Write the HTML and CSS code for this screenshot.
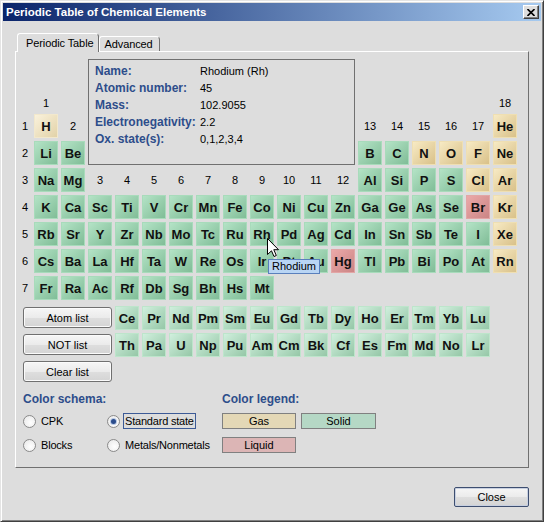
FILE: index.html
```html
<!DOCTYPE html>
<html lang="en">
<head>
    <meta charset="utf-8"/>
    <title>Periodic Table of Chemical Elements</title>
    <link rel="stylesheet" href="styles.css">
</head>
<body>
<div class="window">
    <div class="titlebar">
        <span class="title">Periodic Table of Chemical Elements</span>
        <span class="closebtn">
            <svg width="8" height="7" viewBox="0 0 8 7"><path d="M0.5 0 L7.5 7 M7.5 0 L0.5 7" stroke="#000" stroke-width="1.6"/></svg>
        </span>
    </div>

    <div class="client">
        <ul class="tabs">
            <li class="tab active">Periodic Table</li>
            <li class="tab">Advanced</li>
        </ul>

        <div class="pane">
            <div class="ptable">
                <div class="info">
                    <span class="k">Name:</span><span class="v">Rhodium (Rh)</span>
                    <span class="k">Atomic number:</span><span class="v">45</span>
                    <span class="k">Mass:</span><span class="v">102.9055</span>
                    <span class="k">Electronegativity:</span><span class="v">2.2</span>
                    <span class="k">Ox. state(s):</span><span class="v">0,1,2,3,4</span>
                </div>
                <i class="sp3"></i><i class="sp6"></i>

                <i></i><span class="gn top">1</span><i></i><i class="sp5"></i><span class="gn top">18</span>

                <span class="pn">1</span>
                <div class="el g h">H</div>
                <span class="gn">2</span>
                <span class="gn">13</span><span class="gn">14</span><span class="gn">15</span><span class="gn">16</span><span class="gn">17</span>
                <div class="el g">He</div>

                <span class="pn">2</span>
                <div class="el s">Li</div><div class="el s">Be</div>
                <div class="el s">B</div><div class="el s">C</div><div class="el g">N</div><div class="el g">O</div><div class="el g">F</div><div class="el g">Ne</div>

                <span class="pn">3</span>
                <div class="el s">Na</div><div class="el s">Mg</div>
                <span class="gn">3</span><span class="gn">4</span><span class="gn">5</span><span class="gn">6</span><span class="gn">7</span>
                <span class="gn">8</span><span class="gn">9</span><span class="gn">10</span><span class="gn">11</span><span class="gn">12</span>
                <div class="el s">Al</div><div class="el s">Si</div><div class="el s">P</div><div class="el s">S</div><div class="el g">Cl</div><div class="el g">Ar</div>

                <span class="pn">4</span>
                <div class="el s">K</div><div class="el s">Ca</div><div class="el s">Sc</div><div class="el s">Ti</div><div class="el s">V</div><div class="el s">Cr</div>
                <div class="el s">Mn</div><div class="el s">Fe</div><div class="el s">Co</div><div class="el s">Ni</div><div class="el s">Cu</div><div class="el s">Zn</div>
                <div class="el s">Ga</div><div class="el s">Ge</div><div class="el s">As</div><div class="el s">Se</div><div class="el l">Br</div><div class="el g">Kr</div>

                <span class="pn">5</span>
                <div class="el s">Rb</div><div class="el s">Sr</div><div class="el s">Y</div><div class="el s">Zr</div><div class="el s">Nb</div><div class="el s">Mo</div>
                <div class="el s">Tc</div><div class="el s">Ru</div><div class="el s">Rh</div><div class="el s">Pd</div><div class="el s">Ag</div><div class="el s">Cd</div>
                <div class="el s">In</div><div class="el s">Sn</div><div class="el s">Sb</div><div class="el s">Te</div><div class="el s">I</div><div class="el g">Xe</div>

                <span class="pn">6</span>
                <div class="el s">Cs</div><div class="el s">Ba</div><div class="el s">La</div><div class="el s">Hf</div><div class="el s">Ta</div><div class="el s">W</div>
                <div class="el s">Re</div><div class="el s">Os</div><div class="el s">Ir</div><div class="el s">Pt</div><div class="el s">Au</div><div class="el l">Hg</div>
                <div class="el s">Tl</div><div class="el s">Pb</div><div class="el s">Bi</div><div class="el s">Po</div><div class="el s">At</div><div class="el g">Rn</div>

                <span class="pn">7</span>
                <div class="el s">Fr</div><div class="el s">Ra</div><div class="el s">Ac</div><div class="el s">Rf</div><div class="el s">Db</div><div class="el s">Sg</div>
                <div class="el s">Bh</div><div class="el s">Hs</div><div class="el s">Mt</div>
            </div>

            <div class="lower">
                <div class="btns">
                    <button class="btn">Atom list</button>
                    <button class="btn">NOT list</button>
                    <button class="btn">Clear list</button>
                </div>
                <div class="fblock">
                    <div class="el f">Ce</div><div class="el f">Pr</div><div class="el f">Nd</div><div class="el f">Pm</div><div class="el f">Sm</div><div class="el f">Eu</div><div class="el f">Gd</div>
                    <div class="el f">Tb</div><div class="el f">Dy</div><div class="el f">Ho</div><div class="el f">Er</div><div class="el f">Tm</div><div class="el f">Yb</div><div class="el f">Lu</div>
                    <div class="el f">Th</div><div class="el f">Pa</div><div class="el f">U</div><div class="el f">Np</div><div class="el f">Pu</div><div class="el f">Am</div><div class="el f">Cm</div>
                    <div class="el f">Bk</div><div class="el f">Cf</div><div class="el f">Es</div><div class="el f">Fm</div><div class="el f">Md</div><div class="el f">No</div><div class="el f">Lr</div>
                </div>
            </div>

            <div class="options">
                <div class="schema">
                    <h3>Color schema:</h3>
                    <div class="radios">
                        <label class="radio"><span class="dot"></span><span class="txt">CPK</span></label>
                        <label class="radio"><span class="dot on"></span><span class="txt focus">Standard state</span></label>
                        <label class="radio"><span class="dot"></span><span class="txt">Blocks</span></label>
                        <label class="radio"><span class="dot"></span><span class="txt">Metals/Nonmetals</span></label>
                    </div>
                </div>
                <div class="legendbox">
                    <h3>Color legend:</h3>
                    <div class="legend">
                        <span class="key gas">Gas</span>
                        <span class="key solid">Solid</span>
                        <span class="key liquid">Liquid</span>
                    </div>
                </div>
            </div>
        </div>

        <div class="footer">
            <button class="btn close">Close</button>
        </div>
    </div>

    <div class="tooltip">Rhodium</div>
    <svg class="cursor" width="13" height="20" viewBox="0 0 13 20">
        <path d="M0.5 0.5 V16.5 L4.5 12.8 L7 18.5 L9.3 17.5 L6.8 11.7 H11.5 Z" fill="#fff" stroke="#000" stroke-width="1"/>
    </svg>
</div>
</body>
</html>
```

FILE: styles.css
```css
body {
    margin: 0;
    background: #dddddd;
    font-family: "Liberation Sans", Arial, sans-serif;
    font-size: 11px;
    color: #000;
}

.window {
    position: relative;
    width: 544px;
    height: 522px;
    box-sizing: border-box;
    border: 1px solid;
    border-color: #e4e4e4 #404040 #404040 #e4e4e4;
    box-shadow: inset 1px 1px #fff, inset -1px -1px #808080;
    padding: 2px;
    background: #dddddd;
}

.titlebar {
    height: 18px;
    display: flex;
    align-items: center;
    justify-content: space-between;
    padding: 0 2px 0 3px;
    background: linear-gradient(to right, #0a246a, #a6caf0);
    color: #fff;
    font-weight: bold;
    font-size: 11.5px;
}

.closebtn {
    width: 16px;
    height: 14px;
    box-sizing: border-box;
    display: flex;
    align-items: center;
    justify-content: center;
    background: #dedede;
    border: 1px solid;
    border-color: #fff #404040 #404040 #fff;
    box-shadow: inset -1px -1px #808080;
}

.client {
    padding: 12px 12px 0 12px;
}

/* tabs */
.tabs {
    list-style-type: none;
    margin: 0;
    padding: 0 0 0 2px;
    display: flex;
    align-items: flex-end;
}

.tab {
    height: 15px;
    box-sizing: border-box;
    padding: 0 6px 0 5px;
    line-height: 14px;
    letter-spacing: -0.1px;
    border: 1px solid;
    border-bottom: none;
    border-color: #fff #707070 transparent #fff;
    border-radius: 3px 4px 0 0;
}

.tab.active {
    position: relative;
    z-index: 1;
    height: 19px;
    margin-bottom: -1px;
    padding: 2px 4px 0 8px;
    background: #dddddd;
}

.pane {
    height: 417px;
    box-sizing: border-box;
    border: 1px solid;
    border-color: #fff #707070 #707070 #fff;
    padding: 7px 0 0 3px;
}

/* main table */
.ptable {
    display: grid;
    grid-template-columns: 12px repeat(18, 24px);
    grid-template-rows: 25px repeat(8, 24px);
    gap: 3px;
}

.sp3 { grid-column: span 3; }
.sp5 { grid-column: span 5; }
.sp6 { grid-column: span 6; }

.info {
    grid-column: 4 / 14;
    grid-row: 1 / 5;
    border: 1px solid #707070;
    padding: 2px 6px;
    display: grid;
    grid-template-columns: 105px auto;
    grid-auto-rows: 17px;
    align-items: center;
    align-content: start;
}

.info .k {
    font-weight: bold;
    font-size: 12px;
    color: #2d4d8b;
}

.gn, .pn {
    display: flex;
    align-items: center;
    justify-content: center;
    font-size: 11px;
}

.gn.top {
    align-items: flex-end;
    line-height: 13px;
    padding-bottom: 1px;
}

.el {
    box-sizing: border-box;
    border: 1px solid;
    display: flex;
    align-items: center;
    justify-content: center;
    font-weight: bold;
    font-size: 13px;
    color: #111;
}

.el.s {
    border-color: #a8dbbb;
    background: linear-gradient(135deg, #b4e3c6, #80bd97);
}

.el.g {
    border-color: #efdfb2;
    background: linear-gradient(135deg, #f7eac4, #d9c189);
}

.el.h {
    border-color: #f2e8cc;
    background: linear-gradient(135deg, #faf2dc, #e2d2a8);
}

.el.l {
    border-color: #e2a6a6;
    background: linear-gradient(135deg, #eba9a9, #cb8585);
}

.el.f {
    border-color: #bde5cb;
    background: linear-gradient(135deg, #d0efdd, #95c7a7);
}

/* lower part */
.lower {
    display: flex;
    gap: 3px;
    margin-top: 6px;
    padding-left: 4px;
}

.btns {
    width: 89px;
    display: flex;
    flex-direction: column;
    gap: 6px;
    padding-top: 1px;
}

.btn {
    height: 21px;
    padding: 0;
    border: 1px solid #707070;
    border-radius: 3px;
    background: linear-gradient(#f6f6f6, #ebebeb 50%, #dedede 51%, #d4d4d4);
    box-shadow: inset 0 0 0 1px #fbfbfb;
    font-family: "Liberation Sans", Arial, sans-serif;
    font-size: 11px;
    color: #000;
}

.fblock {
    display: grid;
    grid-template-columns: repeat(14, 24px);
    grid-auto-rows: 24px;
    gap: 3px;
}

.options {
    display: flex;
    margin-top: 10px;
    padding-left: 4px;
}

.options h3 {
    margin: 0;
    font-size: 12px;
    line-height: 14px;
    color: #2d4d8b;
}

.schema {
    width: 199px;
}

.radios {
    display: grid;
    grid-template-columns: 84px auto;
    grid-auto-rows: 16px;
    row-gap: 8px;
    margin-top: 7px;
}

.radio {
    display: flex;
    align-items: center;
}

.dot {
    width: 13px;
    height: 13px;
    box-sizing: border-box;
    border: 1px solid #8a8a8a;
    border-radius: 50%;
    background: radial-gradient(circle at 60% 60%, #ffffff, #e6e6e6);
    display: flex;
    align-items: center;
    justify-content: center;
}

.dot.on::after {
    content: "";
    width: 5px;
    height: 5px;
    border-radius: 50%;
    background: #2a4c8c;
    box-shadow: 0 0 0 1px #b8c8e4;
}

.txt {
    margin-left: 3px;
    padding: 0 1px;
    line-height: 14px;
    letter-spacing: -0.2px;
    border: 1px solid transparent;
}

.txt.focus {
    border-color: #3c5a96;
}

.legend {
    display: grid;
    grid-template-columns: 74px 75px;
    grid-auto-rows: 16px;
    column-gap: 5px;
    row-gap: 8px;
    margin-top: 7px;
}

.key {
    box-sizing: border-box;
    border: 1px solid #808080;
    display: flex;
    align-items: center;
    justify-content: center;
}

.key.gas { background: #e4d8b6; }
.key.solid { background: #b5d8c5; }
.key.liquid { background: #dcb5b5; }

.footer {
    display: flex;
    justify-content: flex-end;
    margin-top: 19px;
}

.btn.close {
    width: 75px;
    height: 20px;
    border-color: #3d4e70;
    border-radius: 2px;
    box-shadow: inset 0 0 0 1px #c8d0e0;
}

/* hover overlays */
.tooltip {
    position: absolute;
    left: 267px;
    top: 258px;
    height: 15px;
    box-sizing: border-box;
    padding: 0 3px;
    line-height: 13px;
    background: #b9d5f4;
    border: 1px solid #5a80bc;
    font-size: 11px;
}

.cursor {
    position: absolute;
    left: 266px;
    top: 237px;
}
```
